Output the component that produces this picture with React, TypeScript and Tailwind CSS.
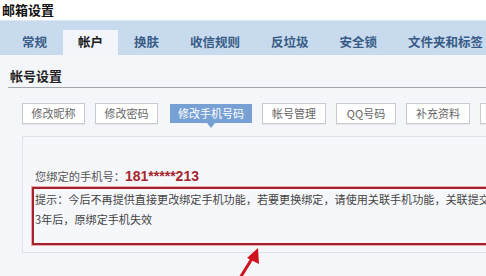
import React from "react";

const tabs = ["常规", "帐户", "换肤", "收信规则", "反垃圾", "安全锁", "文件夹和标签"];

const buttons: { label: string; w: string; active?: boolean }[] = [
  { label: "修改昵称", w: "w-[63px]" },
  { label: "修改密码", w: "w-[63px]" },
  { label: "修改手机号码", w: "w-[82px]", active: true },
  { label: "帐号管理", w: "w-[64px]" },
  { label: "QQ号码", w: "w-[60px]" },
  { label: "补充资料", w: "w-[64px]" },
  { label: "其他", w: "w-[64px]" },
];

export default function App() {
  return (
    <div
      className="relative w-[486px] h-[276px] overflow-hidden bg-white"
      style={{ fontFamily: '"Noto Sans CJK SC", "Liberation Sans", sans-serif' }}
    >
      {/* Title */}
      <div className="h-[20px] pl-[2px] pt-[2px] text-[13px] leading-[16px] font-bold text-[#111] whitespace-nowrap">
        邮箱设置
      </div>

      {/* Tabs */}
      <div className="h-[35px] bg-[#c7daee] border-t border-[#dde8f4] flex items-end pl-[9px] gap-[5px] whitespace-nowrap">
        {tabs.map((t) =>
          t === "帐户" ? (
            <div
              key={t}
              className="h-[25px] -mx-[2px] px-[15px] flex items-center bg-[#f2f5fa] text-[12.5px] font-bold text-[#1a1a1a] shrink-0"
            >
              {t}
            </div>
          ) : (
            <div
              key={t}
              className="h-[25px] px-[13px] flex items-center text-[12.5px] font-bold text-[#385c86] shrink-0"
            >
              {t}
            </div>
          )
        )}
      </div>

      {/* Content */}
      <div className="bg-[#f4f6fa] h-[221px]">
        <div className="ml-[8px] h-[33px] border-b border-[#a3a6ab] pt-[13px] pl-[2px] text-[13px] leading-[16px] font-bold text-[#222]">
          帐号设置
        </div>

        {/* Buttons */}
        <div className="mt-[15px] ml-[22px] flex gap-[10px] whitespace-nowrap">
          {buttons.map((b) =>
            b.active ? (
              <div key={b.label} className={`relative shrink-0 ${b.w} h-[19px] mt-px ml-[2px]`}>
                <div className="h-full bg-[#77a0d4] text-white text-[11px] flex items-center justify-center">
                  {b.label}
                </div>
                <div className="absolute left-1/2 -translate-x-1/2 top-full w-0 h-0 border-l-[4px] border-r-[4px] border-t-[5px] border-l-transparent border-r-transparent border-t-[#77a0d4]" />
              </div>
            ) : (
              <div
                key={b.label}
                className={`shrink-0 ${b.w} h-[21px] bg-white border border-[#c9cbd0] shadow-[0_1px_1px_rgba(0,0,0,0.06)] text-[11px] text-[#666] flex items-center justify-center`}
              >
                {b.label}
              </div>
            )
          )}
        </div>

        {/* Panel */}
        <div className="mt-[12px] ml-[22px] w-[480px] border border-[#dfe2e9] bg-[#f6f7fb] pt-[29px] pb-[7px] pl-[12px]">
          <div className="h-[21px] flex items-center whitespace-nowrap">
            <span className="text-[11.25px] text-[#555]">您绑定的手机号：</span>
            <span
              className="text-[14px] font-bold text-[#a7262e]"
              style={{ fontFamily: '"Liberation Sans", Arial, sans-serif' }}
            >
              181*****213
            </span>
          </div>
          <div className="-ml-[3px] w-[480px] border-2 border-[#a4222b] shadow-[0_0_0_1px_#eaa9ae] pl-px pb-[14px] text-[11.1px] leading-[20px] text-[#444] whitespace-nowrap">
            <div>提示：今后不再提供直接更改绑定手机功能，若要更换绑定，请使用关联手机功能，关联提交</div>
            <div>3年后，原绑定手机失效</div>
          </div>
        </div>
      </div>

      {/* Red annotation arrow */}
      <svg
        className="absolute left-[228px] top-[244px]"
        width="40"
        height="34"
        viewBox="0 0 40 34"
      >
        <line x1="12" y1="34" x2="25" y2="13" stroke="#d0121c" strokeWidth="3" />
        <polygon points="30,4 31,20 19,14" fill="#d0121c" />
      </svg>
    </div>
  );
}
